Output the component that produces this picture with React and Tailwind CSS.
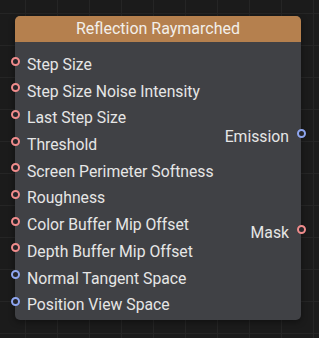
import React from "react";

const inputs = [
  { label: "Step Size", color: "pink" },
  { label: "Step Size Noise Intensity", color: "pink" },
  { label: "Last Step Size", color: "pink" },
  { label: "Threshold", color: "pink" },
  { label: "Screen Perimeter Softness", color: "pink" },
  { label: "Roughness", color: "pink" },
  { label: "Color Buffer Mip Offset", color: "pink" },
  { label: "Depth Buffer Mip Offset", color: "pink" },
  { label: "Normal Tangent Space", color: "blue" },
  { label: "Position View Space", color: "blue" },
];

const Pin = ({ color, className }) => (
  <span
    className={
      "absolute w-[9px] h-[9px] rounded-full bg-[#26262a] border-2 " +
      (color === "blue" ? "border-[#8ea6f0] " : "border-[#f08c8c] ") +
      className
    }
  />
);

const App = () => {
  return (
    <div
      className="w-[319px] h-[338px] overflow-hidden bg-[#1b1b1b] bg-[linear-gradient(to_right,#252525_1px,transparent_1px),linear-gradient(to_bottom,#252525_1px,transparent_1px)] bg-[size:32px_32px] bg-[position:25px_13px] pt-[16px] pl-[15px]"
      style={{ fontFamily: "Roboto, 'Liberation Sans', sans-serif" }}
    >
      <div className="relative w-[286px] h-[304px] rounded-[5px] bg-[#404145] shadow-[0_2px_6px_rgba(0,0,0,0.4)]">
        <div className="h-[26px] rounded-t-[5px] bg-[#b5804e] flex items-center justify-center text-[16px] text-[#f2efea]">
          Reflection Raymarched
        </div>

        <div className="flex pt-[9.5px]">
          <div className="flex flex-col">
            {inputs.map((inp) => (
              <div key={inp.label} className="relative h-[26.7px] flex items-center pl-[12px] text-[15.75px] text-[#e6e6e6]">
                <Pin color={inp.color} className="left-[-4.5px] top-[5px]" />
                {inp.label}
              </div>
            ))}
          </div>

          <div className="flex-1 flex flex-col items-end pt-[72.5px]">
            <div className="relative h-[26.5px] flex items-center pr-[12px] text-[15.75px] text-[#e6e6e6]">
              Emission
              <Pin color="blue" className="right-[-4.5px] top-[5px]" />
            </div>
            <div className="relative h-[26.5px] mt-[69.5px] flex items-center pr-[12px] text-[15.75px] text-[#e6e6e6]">
              Mask
              <Pin color="pink" className="right-[-4.5px] top-[5px]" />
            </div>
          </div>
        </div>
      </div>
    </div>
  );
};

export default App;
